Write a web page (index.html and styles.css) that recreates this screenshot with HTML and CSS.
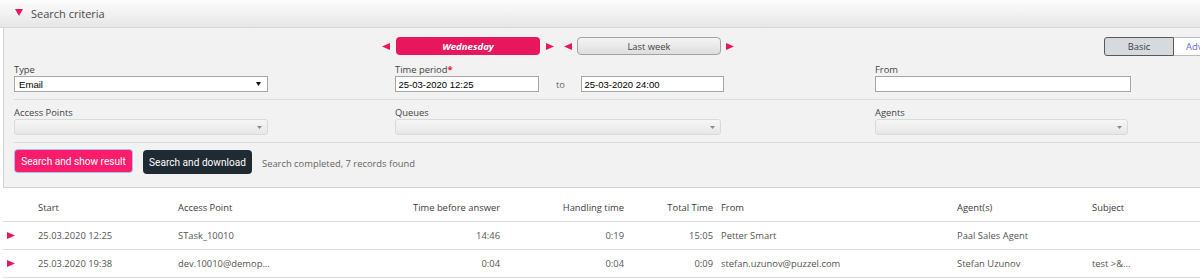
FILE: index.html
```html
<!DOCTYPE html>
<html lang="en">
<head>
<meta charset="utf-8">
<title>Search criteria</title>
<link rel="stylesheet" href="styles.css">
</head>
<body>
<div class="page">
  <div class="section-head">
    <svg class="tri-down" width="8" height="7" viewBox="0 0 8 7"><polygon points="0,0 8,0 4,7"/></svg>
    <span class="section-title">Search criteria</span>
  </div>

  <div class="panel">
    <div class="grid nav-row">
      <div></div>
      <div class="day-nav">
        <svg class="arrow" width="8" height="7" viewBox="0 0 8 7"><polygon points="8,0 8,7 0,3.5"/></svg>
        <div class="period-btn active">Wednesday</div>
        <svg class="arrow" width="8" height="7" viewBox="0 0 8 7"><polygon points="0,0 0,7 8,3.5"/></svg>
        <svg class="arrow gap-left" width="8" height="7" viewBox="0 0 8 7"><polygon points="8,0 8,7 0,3.5"/></svg>
        <div class="period-btn week">Last week</div>
        <svg class="arrow" width="8" height="7" viewBox="0 0 8 7"><polygon points="0,0 0,7 8,3.5"/></svg>
      </div>
      <div class="mode-toggle">
        <span class="mode active">Basic</span><span class="mode other">Advanced</span>
      </div>
    </div>

    <div class="grid row-one">
      <div class="field">
        <div class="label">Type</div>
        <div class="select plain select-type">
          <span>Email</span>
          <svg class="caret" width="5" height="4" viewBox="0 0 5 4"><polygon points="0,0 5,0 2.5,4"/></svg>
        </div>
      </div>
      <div class="field">
        <div class="label">Time period<span class="req">*</span></div>
        <div class="time-range">
          <div class="input w144">25-03-2020 12:25</div>
          <span class="to">to</span>
          <div class="input w143">25-03-2020 24:00</div>
        </div>
      </div>
      <div class="field">
        <div class="label">From</div>
        <div class="input w256"></div>
      </div>
    </div>

    <div class="sep"></div>

    <div class="grid row-two">
      <div class="field">
        <div class="label">Access Points</div>
        <div class="select disabled w254">
          <svg class="caret" width="5" height="3" viewBox="0 0 5 3"><polygon points="0,0 5,0 2.5,3"/></svg>
        </div>
      </div>
      <div class="field">
        <div class="label">Queues</div>
        <div class="select disabled w326">
          <svg class="caret" width="5" height="3" viewBox="0 0 5 3"><polygon points="0,0 5,0 2.5,3"/></svg>
        </div>
      </div>
      <div class="field">
        <div class="label">Agents</div>
        <div class="select disabled w253">
          <svg class="caret" width="5" height="3" viewBox="0 0 5 3"><polygon points="0,0 5,0 2.5,3"/></svg>
        </div>
      </div>
    </div>

    <div class="sep sep-two"></div>

    <div class="actions">
      <button class="btn btn-primary">Search and show result</button>
      <button class="btn btn-dark">Search and download</button>
      <span class="status">Search completed, 7 records found</span>
    </div>
  </div>

  <table class="results">
    <colgroup>
      <col class="c0"><col class="c1"><col class="c2"><col class="c3"><col class="c4"><col class="c5"><col class="c6"><col class="c7"><col class="c8">
    </colgroup>
    <thead>
      <tr>
        <th></th>
        <th>Start</th>
        <th>Access Point</th>
        <th class="num">Time before answer</th>
        <th class="num">Handling time</th>
        <th class="num">Total Time</th>
        <th>From</th>
        <th>Agent(s)</th>
        <th>Subject</th>
      </tr>
    </thead>
    <tbody>
      <tr>
        <td><svg class="row-arrow" width="8" height="7" viewBox="0 0 8 7"><polygon points="0,0 0,7 8,3.5"/></svg></td>
        <td>25.03.2020 12:25</td>
        <td>STask_10010</td>
        <td class="num">14:46</td>
        <td class="num">0:19</td>
        <td class="num">15:05</td>
        <td>Petter Smart</td>
        <td>Paal Sales Agent</td>
        <td></td>
      </tr>
      <tr>
        <td><svg class="row-arrow" width="8" height="7" viewBox="0 0 8 7"><polygon points="0,0 0,7 8,3.5"/></svg></td>
        <td>25.03.2020 19:38</td>
        <td>dev.10010@demop...</td>
        <td class="num">0:04</td>
        <td class="num">0:04</td>
        <td class="num">0:09</td>
        <td>stefan.uzunov@puzzel.com</td>
        <td>Stefan Uzunov</td>
        <td>test &gt;&amp;...</td>
      </tr>
    </tbody>
  </table>
</div>
</body>
</html>
```

FILE: styles.css
```css
html, body {
  margin: 0;
  padding: 0;
  overflow: hidden;
  background: #ffffff;
}

body {
  width: 1200px;
  height: 278px;
  font-family: "Open Sans", "DejaVu Sans", sans-serif;
  font-size: 9.4px;
  color: #444444;
}

/* ---------- section header ---------- */
.section-head {
  height: 27px;
  border-bottom: 1px solid #d5d5d5;
  background: linear-gradient(#fcfcfc, #e6e6e6);
  display: flex;
  align-items: center;
  padding-left: 15px;
}

.tri-down {
  fill: #e8175d;
  align-self: flex-start;
  margin-top: 9px;
  margin-right: 8px;
}

.section-title {
  font-size: 11px;
  color: #4a4a4a;
}

/* ---------- criteria panel ---------- */
.panel {
  margin-left: 3px;
  border-left: 1px solid #d3d3d3;
  border-bottom: 1px solid #d3d3d3;
  background: #f2f2f2;
  padding: 9px 0 13px 10px;
}

.grid {
  display: grid;
  grid-template-columns: 381px 480px 1fr;
}

.nav-row {
  height: 19px;
  align-items: start;
}

.day-nav {
  display: flex;
  align-items: center;
  height: 18px;
  margin-left: -13px;
}

.arrow {
  fill: #e8175d;
  flex: none;
}

.day-nav .arrow:first-child { margin-right: 6px; }
.period-btn.active + .arrow { margin-left: 6px; }
.arrow.gap-left { margin-left: 10px; margin-right: 5px; }
.period-btn.week + .arrow { margin-left: 5px; }

.period-btn {
  box-sizing: border-box;
  width: 144px;
  height: 18px;
  border-radius: 4px;
  display: flex;
  align-items: center;
  justify-content: center;
}

.period-btn.active {
  background: #e8175d;
  color: #ffffff;
  font-weight: bold;
  font-style: italic;
  font-size: 9.6px;
}

.period-btn.week {
  background: linear-gradient(#f4f4f4, #dedede);
  border: 1px solid #a3a3a3;
  color: #444444;
  font-size: 9.4px;
}

.mode-toggle {
  display: flex;
  margin-left: 229px;
  white-space: nowrap;
}

.mode {
  box-sizing: border-box;
  height: 19px;
  display: flex;
  align-items: center;
  justify-content: center;
  font-size: 9.4px;
}

.mode.active {
  width: 70px;
  background: #d6dade;
  border: 1px solid #595959;
  border-radius: 3px 0 0 3px;
  color: #3c3c3c;
}

.mode.other {
  width: 80px;
  background: #ffffff;
  border: 1px solid #bcbcbc;
  border-left: none;
  color: #6a6ad8;
  justify-content: flex-start;
  padding-left: 12px;
}

.row-one { margin-top: 7px; }
.row-two { margin-top: 6px; }

.label {
  line-height: 13px;
  height: 13px;
  color: #444444;
}

.req {
  color: #e4252b;
  font-weight: bold;
}

.select,
.input {
  box-sizing: border-box;
  height: 16px;
  display: flex;
  align-items: center;
}

.select.plain {
  width: 254px;
  background: #ffffff;
  border: 1px solid #a6a6a6;
  padding: 0 6px 0 4px;
  justify-content: space-between;
  font-family: "Liberation Sans", Arial, sans-serif;
  font-size: 9.6px;
  color: #000000;
}

.select.plain .caret { fill: #111111; }

.select.disabled {
  background: linear-gradient(#f6f6f6, #e7e7e7);
  border: 1px solid #dadada;
  border-radius: 3px;
  justify-content: flex-end;
  padding-right: 5px;
}

.select.disabled .caret { fill: #8a8a8a; }

.input {
  background: #ffffff;
  border: 1px solid #a6a6a6;
  padding-left: 2.5px;
  font-family: "Liberation Sans", Arial, sans-serif;
  font-size: 9.5px;
  color: #000000;
}

.w144 { width: 144px; }
.w143 { width: 143px; }
.w256 { width: 256px; }
.w254 { width: 254px; }
.w326 { width: 326px; }
.w253 { width: 253px; }

.time-range {
  display: flex;
  align-items: center;
}

.to {
  box-sizing: border-box;
  width: 42px;
  padding-left: 17px;
  color: #666666;
}

.sep {
  height: 1px;
  background: #dcdcdc;
  margin-top: 7px;
}

.actions {
  display: flex;
  align-items: flex-start;
  margin-top: 7px;
  height: 24px;
}

.btn {
  border: none;
  margin: 0;
  padding: 0;
  font-family: Roboto, "Open Sans", sans-serif;
  font-size: 10.1px;
  color: #ffffff;
  display: flex;
  align-items: center;
  justify-content: center;
}

.btn-primary {
  width: 117px;
  height: 22px;
  margin-left: 1px;
  background: #fc1c6c;
  border-radius: 3px;
  box-shadow: 0 0 0 1px #a3bff2;
}

.btn-dark {
  width: 109px;
  height: 24px;
  margin-left: 11px;
  background: #1f2a32;
  border-radius: 4px;
}

.status {
  margin-left: 10px;
  align-self: center;
  margin-top: 2px;
  color: #666666;
}

/* ---------- results table ---------- */
.results {
  margin: 6px 0 0 3px;
  border-collapse: collapse;
  table-layout: fixed;
  width: 1250px;
}

.c0 { width: 31px; }
.c1 { width: 140px; }
.c2 { width: 156px; }
.c3 { width: 174px; }
.c4 { width: 124px; }
.c5 { width: 89px; }
.c6 { width: 236px; }
.c7 { width: 135px; }
.c8 { width: 165px; }

.results th,
.results td {
  height: 27px;
  padding: 0 4px;
  border-bottom: 1px solid #dcdcdc;
  text-align: left;
  font-weight: normal;
  white-space: nowrap;
  overflow: hidden;
  vertical-align: middle;
}

.results th { color: #3d3d3d; }
.results td { color: #555555; }

.results .num { text-align: right; }

.row-arrow {
  display: block;
  fill: #e8175d;
}
```
